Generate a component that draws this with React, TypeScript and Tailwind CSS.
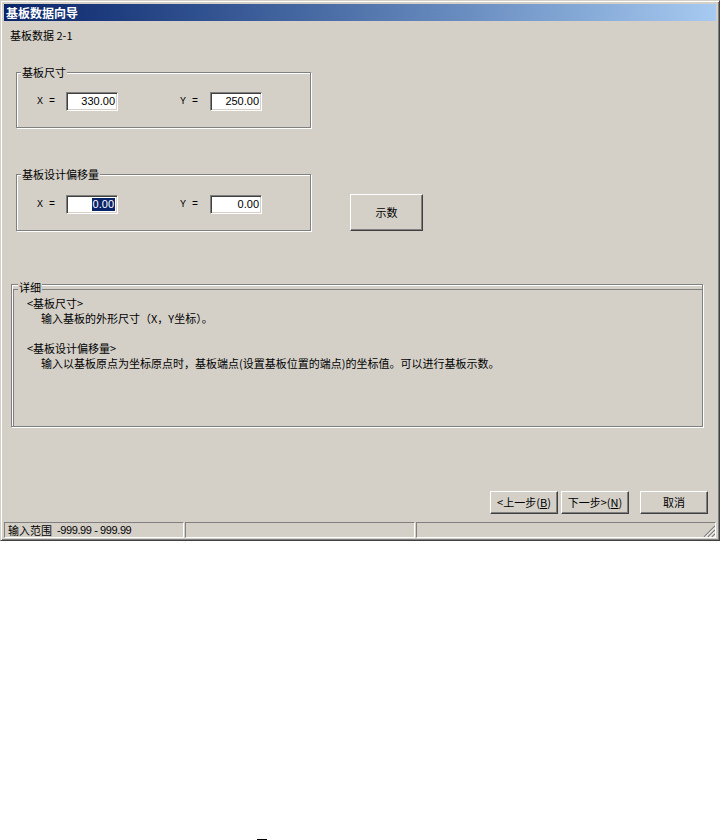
import React from "react";

const raised =
  "flex items-center justify-center border border-t-white border-l-white border-r-[#404040] border-b-[#404040] bg-[#d4d0c8] shadow-[inset_-1px_-1px_0_#808080]";
const etched = "border border-[#808080] shadow-[1px_1px_0_#fff,inset_1px_1px_0_#fff]";
const sunken = "border border-t-[#808080] border-l-[#808080] border-r-white border-b-white";

function Field({ value, selected }: { value: string; selected?: boolean }) {
  return (
    <div className="flex h-[19px] w-[52px] items-center justify-end border border-t-[#808080] border-l-[#808080] border-r-white border-b-white bg-white pr-[2px] font-['Liberation_Sans',sans-serif] text-[11px] shadow-[inset_1px_1px_0_#404040,inset_-1px_-1px_0_#d4d0c8]">
      <span className={selected ? "bg-[#0a246a] px-px leading-[13px] text-white" : "leading-[13px]"}>{value}</span>
    </div>
  );
}

function XYRow({ x, y, selected }: { x: string; y: string; selected?: boolean }) {
  return (
    <div className="flex items-center pl-[20px]">
      <span className="font-['Liberation_Mono',monospace] text-[10px] leading-[19px] whitespace-pre">X =</span>
      <div className="ml-[11px]">
        <Field value={x} selected={selected} />
      </div>
      <span className="ml-[62px] font-['Liberation_Mono',monospace] text-[10px] leading-[19px] whitespace-pre">Y =</span>
      <div className="ml-[12px]">
        <Field value={y} />
      </div>
    </div>
  );
}

export default function App() {
  return (
    <div className="flex h-[840px] w-[720px] flex-col bg-white font-['Noto_Sans_CJK_SC',sans-serif] text-[11px] text-black">
      {/* Dialog window */}
      <div className="flex h-[541px] w-[720px] flex-col border border-t-[#d4d0c8] border-l-[#d4d0c8] border-r-[#404040] border-b-[#404040] bg-[#d4d0c8] px-[3px] pt-[3px] pb-[2px] shadow-[inset_1px_1px_0_#fff,inset_-1px_-1px_0_#808080]">
        {/* Title bar */}
        <div className="flex h-[17px] items-center bg-linear-to-r from-[#0a246a] to-[#a6caf0] pl-[2px] text-[12px] leading-none font-bold text-white">
          基板数据向导
        </div>

        <div className="ml-[6px] mt-[8px] leading-[12px]">基板数据 2-1</div>

        {/* 基板尺寸 */}
        <div className={"relative ml-[12px] mt-[31px] h-[56px] w-[295px] pt-[19px] " + etched}>
          <span className="absolute -top-[7px] left-[4px] bg-[#d4d0c8] px-px leading-[12px]">基板尺寸</span>
          <XYRow x="330.00" y="250.00" />
        </div>

        {/* 基板设计偏移量 + 示数 */}
        <div className="ml-[12px] mt-[46px] flex items-start">
          <div className={"relative h-[57px] w-[295px] pt-[20px] " + etched}>
            <span className="absolute -top-[7px] left-[4px] bg-[#d4d0c8] px-px leading-[12px]">基板设计偏移量</span>
            <XYRow x="0.00" y="0.00" selected />
          </div>
          <button className={"ml-[39px] mt-[20px] h-[37px] w-[73px] text-[11px] " + raised}>示数</button>
        </div>

        {/* 详细 */}
        <div className={"relative ml-[7px] mt-[53px] flex h-[143px] w-[692px] flex-col " + etched}>
          <span className="absolute -top-[4px] left-[6px] bg-[#d4d0c8] px-px leading-[12px]">详细</span>
          <div className="ml-px mt-[4px] flex-1 border-t border-l border-[#808080] pl-[13px] pt-[6px] leading-[15px]">
            <div>&lt;基板尺寸&gt;</div>
            <div className="pl-[14px]">输入基板的外形尺寸（X，Y坐标）。</div>
            <div className="h-[15px]" />
            <div>&lt;基板设计偏移量&gt;</div>
            <div className="pl-[14px]">
              输入以基板原点为坐标原点时，基板端点(设置基板位置的端点)的坐标值。可以进行基板示数。
            </div>
          </div>
        </div>

        {/* Wizard buttons */}
        <div className="mt-[64px] flex h-[23px] justify-end pr-[8px]">
          <button className={"w-[68px] text-[11px] " + raised}>
            &lt;上一步(<u>B</u>)
          </button>
          <button className={"ml-[3px] w-[68px] text-[11px] " + raised}>
            下一步&gt;(<u>N</u>)
          </button>
          <button className={"ml-[11px] w-[68px] text-[11px] " + raised}>取消</button>
        </div>

        {/* Status bar */}
        <div className="mt-[8px] flex h-[16px] gap-px">
          <div className={"flex w-[180px] items-center pl-[3px] leading-[14px] " + sunken}>
            <span>输入范围</span>
            <span className="ml-[5px] font-['Liberation_Sans',sans-serif] tracking-[-0.4px]">-999.99 - 999.99</span>
          </div>
          <div className={"w-[230px] " + sunken} />
          <div className={"flex flex-1 items-end justify-end " + sunken}>
            <svg width="12" height="12" viewBox="0 0 12 12">
              <path d="M12 1 L1 12 M12 5 L5 12 M12 9 L9 12" stroke="#808080" strokeWidth="1.2" />
              <path d="M12 2.5 L2.5 12 M12 6.5 L6.5 12 M12 10.5 L10.5 12" stroke="#fff" strokeWidth="1" />
            </svg>
          </div>
        </div>
      </div>

      <div className="flex-1" />
      <div className="ml-[257px] h-px w-[10px] bg-black" />
    </div>
  );
}
